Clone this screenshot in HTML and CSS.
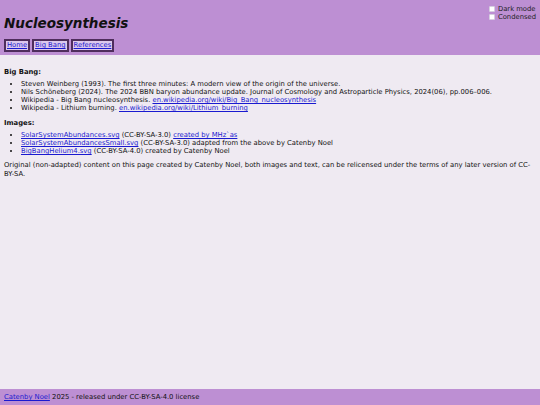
FILE: index.html
```html
<!DOCTYPE html>
<html lang="en">
<head>
<meta charset="utf-8">
<title>Nucleosynthesis</title>
<link rel="stylesheet" href="styles.css">
</head>
<body>
<header class="site-header">
  <div class="header-left">
    <h1 class="title">Nucleosynthesis</h1>
    <nav class="nav">
      <span class="nav-item"><a href="#">Home</a></span>
      <span class="nav-item"><a href="#">Big Bang</a></span>
      <span class="nav-item"><a href="#">References</a></span>
    </nav>
  </div>
  <div class="options">
    <label class="opt"><input type="checkbox" class="cb"> Dark mode</label>
    <label class="opt"><input type="checkbox" class="cb"> Condensed</label>
  </div>
</header>
<main class="content">
  <h2 class="sec">Big Bang:</h2>
  <ul class="list">
    <li>Steven Weinberg (1993). The first three minutes: A modern view of the origin of the universe.</li>
    <li>Nils Schöneberg (2024). The 2024 BBN baryon abundance update. Journal of Cosmology and Astroparticle Physics, 2024(06), pp.006–006.</li>
    <li>Wikipedia - Big Bang nucleosynthesis. <a href="#">en.wikipedia.org/wiki/Big_Bang_nucleosynthesis</a></li>
    <li>Wikipedia - Lithium burning. <a href="#">en.wikipedia.org/wiki/Lithium_burning</a></li>
  </ul>
  <h2 class="sec">Images:</h2>
  <ul class="list list-last">
    <li><a href="#">SolarSystemAbundances.svg</a> (CC-BY-SA-3.0) <a href="#">created by MHz`as</a></li>
    <li><a href="#">SolarSystemAbundancesSmall.svg</a> (CC-BY-SA-3.0) adapted from the above by Catenby Noel</li>
    <li><a href="#">BigBangHelium4.svg</a> (CC-BY-SA-4.0) created by Catenby Noel</li>
  </ul>
  <p class="note">Original (non-adapted) content on this page created by Catenby Noel, both images and text, can be relicensed under the terms of any later version of CC-BY-SA.</p>
</main>
<footer class="site-footer">
  <a href="#">Catenby Noel</a> 2025 - released under CC-BY-SA-4.0 license
</footer>
</body>
</html>
```
FILE: styles.css
```css
html, body {
  margin: 0;
  padding: 0;
}
body {
  font-family: "DejaVu Sans", Verdana, sans-serif;
  font-size: 6.8px;
  line-height: 8px;
  color: #111;
  background: #efeaf2;
  min-height: 100vh;
  display: flex;
  flex-direction: column;
}
a {
  color: #1a1ad0;
}
.site-header {
  background: #bd8fd3;
  display: flex;
  justify-content: space-between;
  padding: 4px 4px 3px 4px;
}
.title {
  font-size: 13.5px;
  line-height: 16px;
  font-weight: bold;
  font-style: italic;
  margin: 11px 0 8px 0;
}
.nav {
  display: flex;
  gap: 2px;
}
.nav-item {
  border: 2px solid #4e2d5c;
  background: #dcc8ec;
  padding: 0 1px;
  line-height: 9px;
}
.options {
  display: flex;
  flex-direction: column;
  padding-top: 1px;
}
.opt {
  display: flex;
  align-items: center;
  gap: 3px;
  height: 8px;
  color: #222;
}
.cb {
  -webkit-appearance: none;
  appearance: none;
  margin: 0;
  width: 6px;
  height: 6px;
  background: #fff;
  border: 1px solid #d6cfe0;
  border-radius: 1px;
  box-sizing: border-box;
}
.content {
  flex: 1;
  padding: 13px 4px 8px 4px;
}
.sec {
  font-size: 6.8px;
  line-height: 8px;
  font-weight: bold;
  margin: 0 0 4px 0;
}
.list {
  margin: 0 0 7px 0;
  padding-left: 17px;
}
.list-last {
  margin-bottom: 6px;
}
.note {
  margin: 0;
  line-height: 9px;
}
.site-footer {
  background: #bd8fd3;
  padding: 4px 4px 4px 4px;
}
```
